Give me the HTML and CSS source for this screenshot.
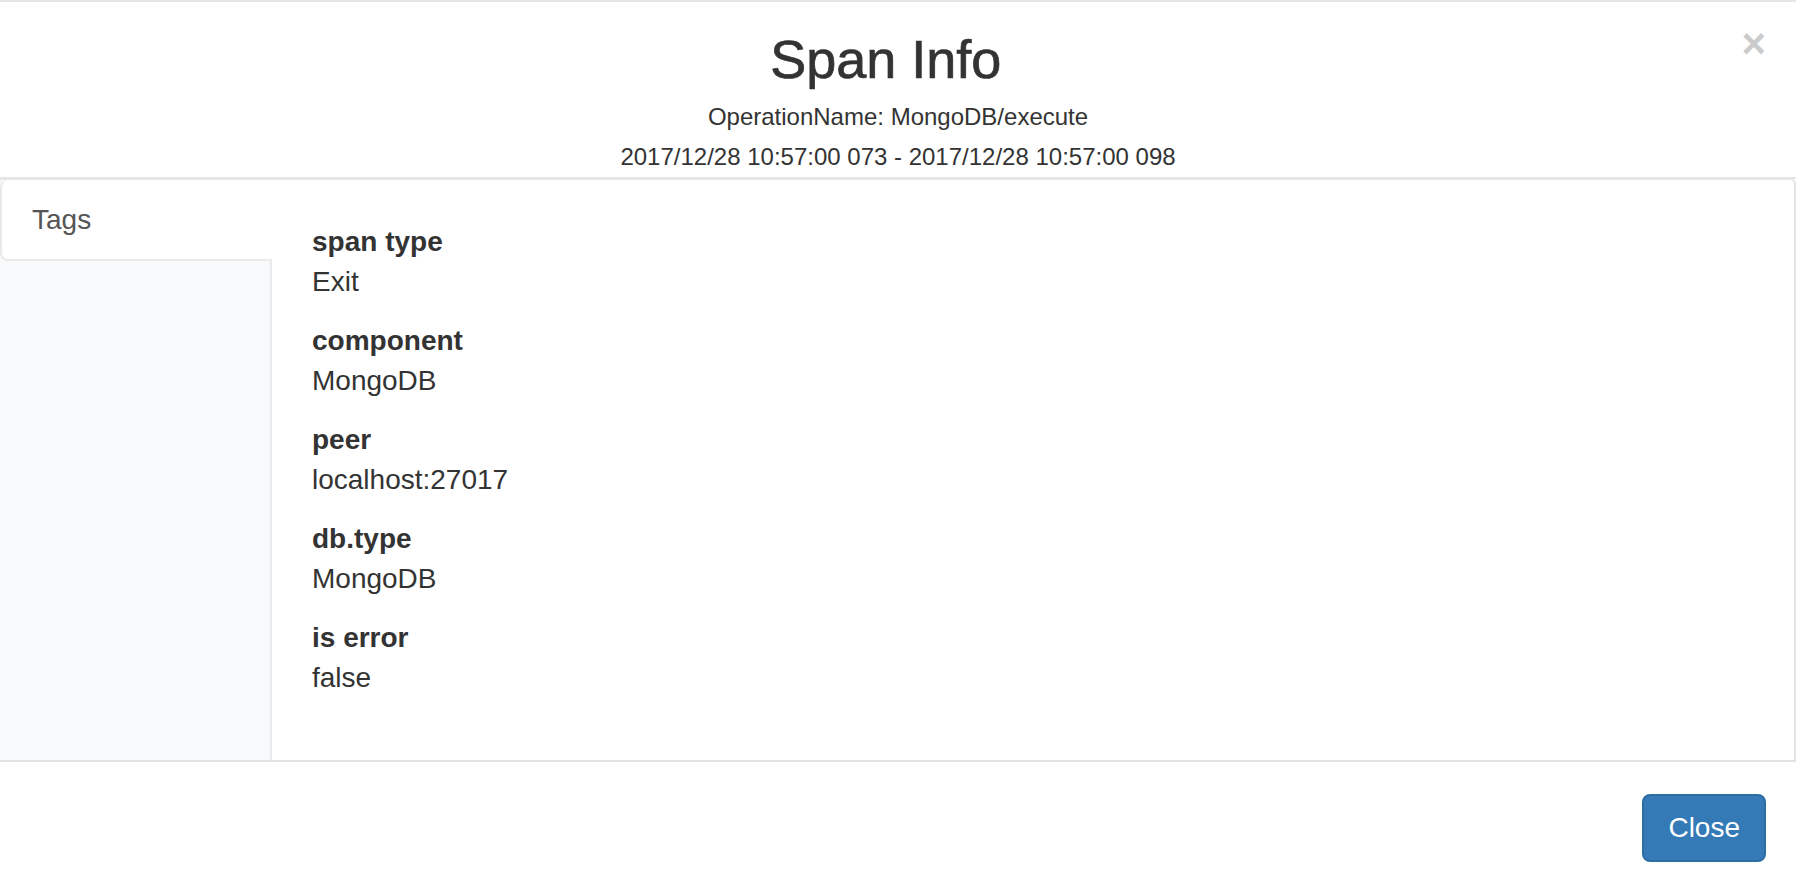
FILE: index.html
```html
<!DOCTYPE html>
<html lang="en">
<head>
<meta charset="utf-8">
<title>Span Info</title>
<link rel="stylesheet" href="styles.css">
</head>
<body>
<div class="modal">
  <header class="modal-header">
    <div class="title-row">
      <h3 class="modal-title">Span Info</h3>
      <button class="close" type="button" aria-label="Close">&times;</button>
    </div>
    <div class="sub first">OperationName: MongoDB/execute</div>
    <div class="sub">2017/12/28 10:57:00 073 - 2017/12/28 10:57:00 098</div>
  </header>
  <div class="tabs">
    <nav class="tab-nav">
      <div class="tab active">Tags</div>
    </nav>
    <div class="tab-pane">
      <div class="item"><div class="label">span type</div><div class="value">Exit</div></div>
      <div class="item"><div class="label">component</div><div class="value">MongoDB</div></div>
      <div class="item"><div class="label">peer</div><div class="value">localhost:27017</div></div>
      <div class="item"><div class="label">db.type</div><div class="value">MongoDB</div></div>
      <div class="item"><div class="label">is error</div><div class="value">false</div></div>
    </div>
  </div>
  <footer class="modal-footer">
    <button class="btn" type="button">Close</button>
  </footer>
</div>
</body>
</html>
```

FILE: styles.css
```css
html, body {
  margin: 0;
  padding: 0;
  background: #fff;
}
body {
  font-family: "Liberation Sans", Arial, Helvetica, sans-serif;
  font-size: 28px;
  line-height: 40px;
  color: #333;
}
.modal {
  border-top: 2px solid #e6e6e6;
  height: 890px;
  overflow: hidden;
}
.modal-header {
  padding-top: 27px;
  border-bottom: 2px solid #e5e5e5;
  text-align: center;
}
.title-row {
  display: flex;
  padding: 0 30px;
}
.modal-title {
  flex: 1;
  margin: 0;
  font-size: 54px;
  line-height: 60px;
  font-weight: normal;
  color: #333;
  -webkit-text-stroke: 0.7px #333;
}
.close {
  align-self: flex-start;
  margin-top: -6px;
  padding: 0;
  border: 0;
  background: none;
  font-family: "Liberation Sans", Arial, sans-serif;
  font-size: 42px;
  line-height: 42px;
  font-weight: bold;
  color: #000;
  opacity: 0.2;
  cursor: pointer;
}
.sub {
  font-size: 24px;
  line-height: 40px;
}
.sub.first {
  margin-top: 8px;
}
.tabs {
  display: flex;
  margin-top: -1px;
  border-top: 2px solid #e6e6e6;
  border-right: 2px solid #e3e3e3;
  border-bottom: 2px solid #e3e3e3;
  border-top-right-radius: 6px;
}
.tab-nav {
  flex: none;
  width: 270px;
  background: #f8f9fa;
  border-right: 2px solid #e9e9e9;
}
.tab {
  margin-right: -2px;
  padding: 20px 30px 19px;
  background: #fff;
  border-left: 2px solid #eaeaea;
  border-bottom: 2px solid #eaeaea;
  border-radius: 8px 0 0 8px;
  color: #555;
}
.tab-pane {
  flex: 1;
  padding: 42px 40px 43px;
}
.item {
  margin-bottom: 19px;
}
.label {
  font-weight: bold;
}
.modal-footer {
  display: flex;
  justify-content: flex-end;
  padding: 32px 30px 30px;
}
.btn {
  font-family: inherit;
  font-size: 28px;
  line-height: 40px;
  padding: 12px 24px;
  border: 2px solid #2e6da4;
  border-radius: 8px;
  background: #337ab7;
  color: #fff;
  cursor: pointer;
}
```
